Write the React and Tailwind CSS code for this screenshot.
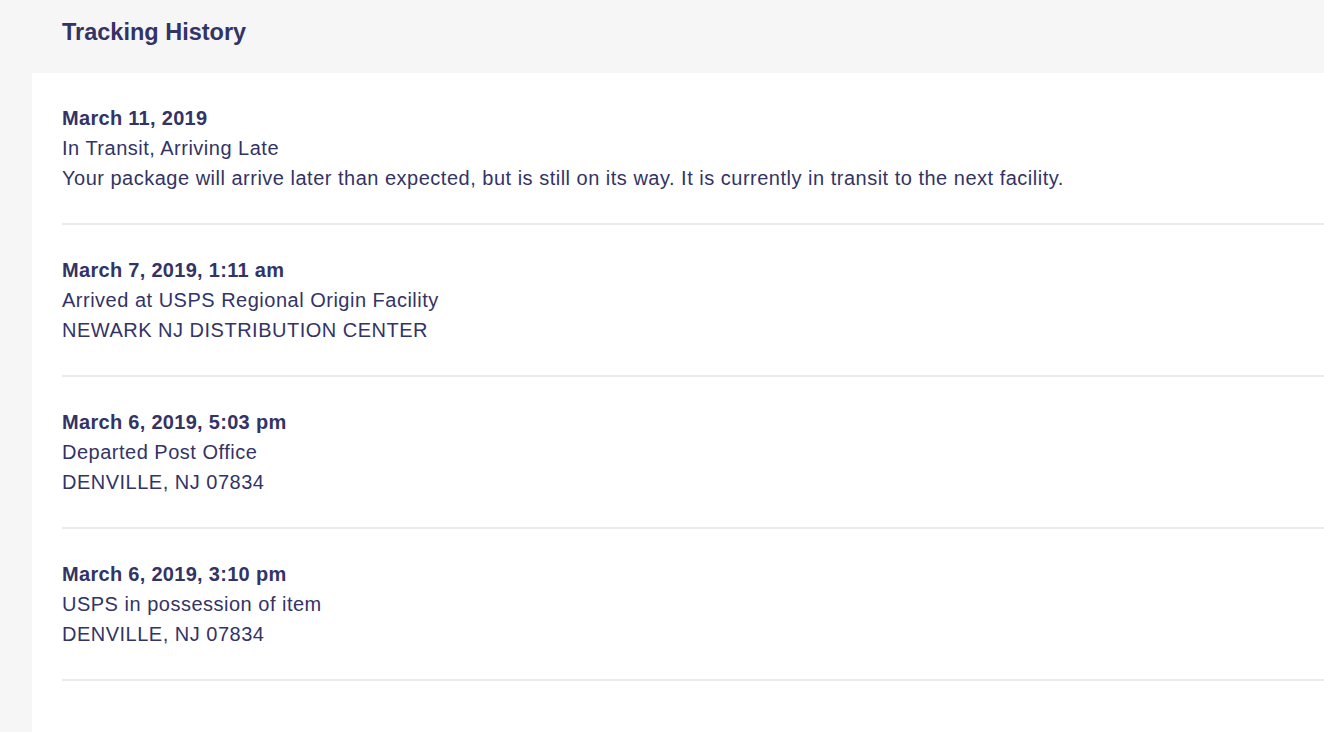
const events = [
  {
    date: "March 11, 2019",
    status: "In Transit, Arriving Late",
    detail:
      "Your package will arrive later than expected, but is still on its way. It is currently in transit to the next facility.",
  },
  {
    date: "March 7, 2019, 1:11 am",
    status: "Arrived at USPS Regional Origin Facility",
    detail: "NEWARK NJ DISTRIBUTION CENTER",
  },
  {
    date: "March 6, 2019, 5:03 pm",
    status: "Departed Post Office",
    detail: "DENVILLE, NJ 07834",
  },
  {
    date: "March 6, 2019, 3:10 pm",
    status: "USPS in possession of item",
    detail: "DENVILLE, NJ 07834",
  },
];

const App = () => {
  return (
    <div className="min-h-screen bg-[#f6f6f6] text-[#333366] font-['Liberation_Sans',Arial,sans-serif]">
      {/* header */}
      <div className="h-[73px] flex items-center pl-[62px] pb-[8px]">
        <h2 className="text-[23.5px] font-bold leading-none">Tracking History</h2>
      </div>

      {/* list panel */}
      <div className="ml-8 bg-white min-h-[659px] pl-[30px]">
        {events.map((ev, i) => (
          <div
            key={i}
            className="pt-[30px] pb-[30px] border-b-2 border-[#ebebeb] text-[20px] leading-[30px] tracking-[0.5px]"
          >
            <div className="font-bold tracking-[0.3px]">{ev.date}</div>
            <div>{ev.status}</div>
            <div>{ev.detail}</div>
          </div>
        ))}
      </div>
    </div>
  );
};

export default App;
